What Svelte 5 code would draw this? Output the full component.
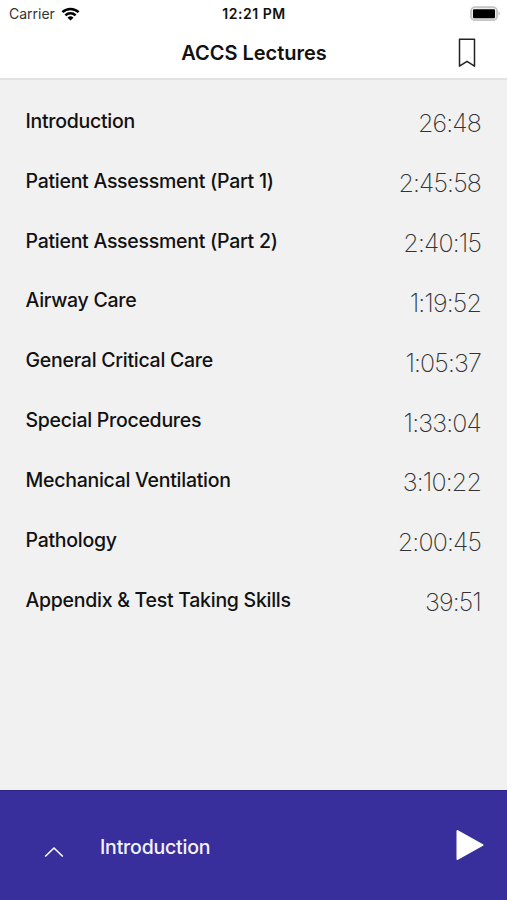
<script>
  const lectures = [
    { title: "Introduction", duration: "26:48" },
    { title: "Patient Assessment (Part 1)", duration: "2:45:58" },
    { title: "Patient Assessment (Part 2)", duration: "2:40:15" },
    { title: "Airway Care", duration: "1:19:52" },
    { title: "General Critical Care", duration: "1:05:37" },
    { title: "Special Procedures", duration: "1:33:04" },
    { title: "Mechanical Ventilation", duration: "3:10:22" },
    { title: "Pathology", duration: "2:00:45" },
    { title: "Appendix & Test Taking Skills", duration: "39:51" },
  ];
  let current = $state(0);
</script>

<div class="screen">
  <div class="status">
    <div class="carrier">
      <span>Carrier</span>
      <svg width="19" height="14" viewBox="0 0 18 14">
        <g fill="none" stroke="#000" stroke-width="2.5">
          <path d="M0.9 5.2a11.6 11.6 0 0 1 16.2 0" />
          <path d="M3.9 8.4a7.3 7.3 0 0 1 10.2 0" />
        </g>
        <path d="M9 13.6L6 10.7a4.3 4.3 0 0 1 6 0z" />
      </svg>
    </div>
    <span class="clock">12:21 PM</span>
    <svg class="battery" width="32" height="16" viewBox="0 0 32 16">
      <rect x="2" y="1.2" width="26" height="13" rx="4" fill="#eee" stroke="#c4c4c4" stroke-width="1.8" />
      <rect x="4" y="3.2" width="22" height="9" rx="1.2" />
      <path d="M29.6 5.6q2.2 2.1 0 4.2z" fill="#a8a8a8" />
    </svg>
  </div>

  <header>
    <h1>ACCS Lectures</h1>
    <button class="bookmark" aria-label="Bookmarks">
      <svg width="18" height="30" viewBox="0 0 18 30">
        <path d="M1.5 1.2h15v27L9 23.4l-7.5 4.8z" fill="none" stroke="#222" stroke-width="1.5" stroke-linejoin="round" />
      </svg>
    </button>
  </header>

  <ul>
    {#each lectures as lecture, i}
      <li>
        <button class="row" onclick={() => (current = i)}>
          <span class="title">{lecture.title}</span>
          <span class="duration">{lecture.duration}</span>
        </button>
      </li>
    {/each}
  </ul>

  <footer>
    <button class="expand" aria-label="Show player">
      <svg width="20" height="12" viewBox="0 0 20 12">
        <path d="M1.2 10.5L10 2l8.8 8.5" fill="none" stroke="#fff" stroke-width="1.6" />
      </svg>
    </button>
    <span class="playing">{lectures[current].title}</span>
    <button class="play" aria-label="Play">
      <svg width="28" height="32" viewBox="0 0 28 32">
        <path d="M1.5 2L26.5 16 1.5 30z" fill="#fff" stroke="#fff" stroke-width="2" stroke-linejoin="round" />
      </svg>
    </button>
  </footer>
</div>

<style>
  :global(body) {
    margin: 0;
  }
  .screen {
    display: flex;
    flex-direction: column;
    height: 900px;
    background: #f1f1f1;
    color: #111;
    font-family: Inter, "Liberation Sans", sans-serif;
  }
  button {
    padding: 0;
    border: 0;
    background: none;
    color: inherit;
    font: inherit;
    cursor: pointer;
  }
  svg {
    display: block;
  }

  .status {
    display: grid;
    grid-template-columns: 1fr auto 1fr;
    align-items: center;
    height: 27px;
    padding: 0 6px 0 9px;
    background: #fff;
    font-size: 14px;
    line-height: 27px;
  }
  .carrier {
    display: flex;
    align-items: center;
    gap: 6px;
    color: #333;
  }
  .clock {
    margin-right: 2px;
    font-weight: 600;
    letter-spacing: 0.55px;
  }
  .battery {
    justify-self: end;
  }

  header {
    display: grid;
    grid-template-columns: 1fr auto 1fr;
    align-items: center;
    height: 51px;
    padding: 0 31px;
    border-bottom: 2px solid #e2e2e2;
    background: #fff;
  }
  h1 {
    grid-column: 2;
    margin: 0 0 0 1px;
    font-size: 20px;
    font-weight: 560;
    line-height: 50px;
  }
  .bookmark {
    justify-self: end;
  }

  ul {
    flex: 1;
    margin: 0;
    padding: 11px 25px 0;
    list-style: none;
  }
  .row {
    display: flex;
    align-items: center;
    justify-content: space-between;
    width: 100%;
    height: 59.85px;
  }
  .title {
    padding-left: 0.5px;
    font-size: 19.5px;
    font-weight: 500;
    letter-spacing: -0.27px;
  }
  .duration {
    padding: 5px 1px 0 0;
    color: #333;
    font-size: 25px;
    font-weight: 250;
    letter-spacing: -0.85px;
  }

  footer {
    display: flex;
    align-items: center;
    height: 110px;
    padding: 0 23px 0 44px;
    box-sizing: border-box;
    background: #382e9c;
    border-top: 1px solid #2e2488;
    color: #f4f2ff;
  }
  .expand {
    padding-top: 13px;
  }
  .playing {
    flex: 1;
    padding: 3px 0 0 36px;
    font-size: 19.5px;
    font-weight: 500;
    letter-spacing: -0.2px;
  }
  .play {
    padding-bottom: 1px;
  }
</style>
